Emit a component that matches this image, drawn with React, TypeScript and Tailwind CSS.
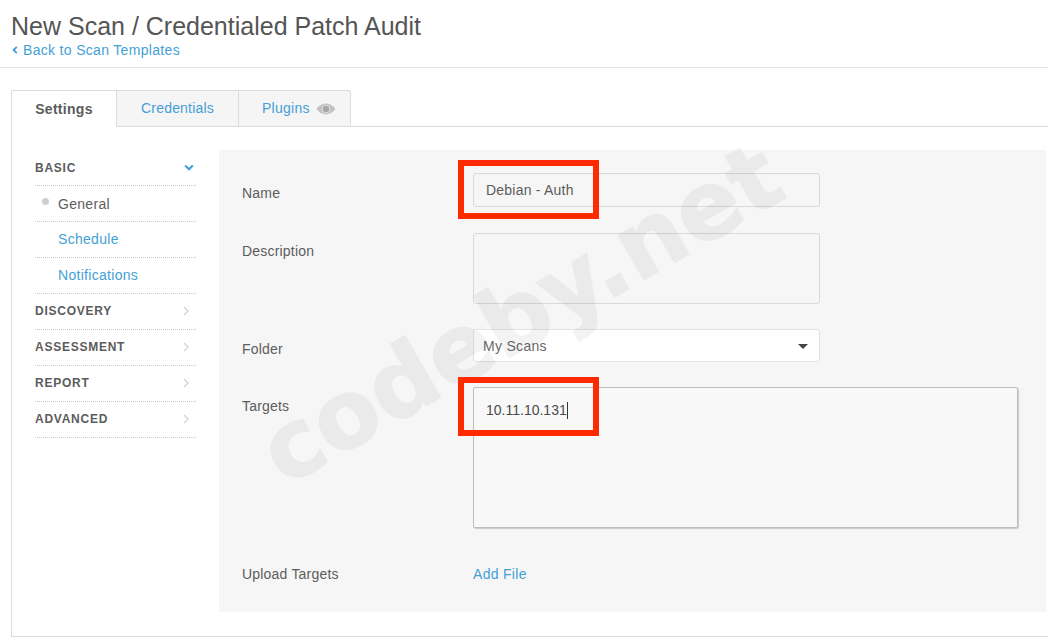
import React from 'react';

const LINK = 'text-[#459fd6]';

const SideHead = ({ label, open }: { label: string; open?: boolean }) => (
  <div className={`h-[36px] flex items-center justify-between border-b border-dotted border-[#c8c8c8] ${open ? '' : 'pb-[1px]'}`}>
    <span className="text-[12px] font-bold tracking-[0.75px] text-[#5c5c5c]">{label}</span>
    {open ? (
      <svg width="10" height="7" viewBox="0 0 10 7" className="mr-[2px]">
        <path d="M1.2 1.5 5 5.2l3.8-3.7" fill="none" stroke="#459fd6" strokeWidth="2.2" />
      </svg>
    ) : (
      <svg width="6" height="10" viewBox="0 0 6 10" className="mr-[7px]">
        <path d="M1 1l4 4-4 4" fill="none" stroke="#d2d2d2" strokeWidth="1.3" />
      </svg>
    )}
  </div>
);

const SideItem = ({ label, active }: { label: string; active?: boolean }) => (
  <div className={`relative h-[36px] flex items-center pl-[23px] border-b border-dotted border-[#c8c8c8] ${active ? 'pt-[1px]' : ''}`}>
    {active && <span className="absolute left-[7px] top-[12px] w-[7px] h-[7px] rounded-full bg-[#cfcfcf]" />}
    <span className={`text-[14px] tracking-[0.3px] ${active ? 'text-[#5c5c5c]' : LINK}`}>{label}</span>
  </div>
);

const Row = ({ label, pt, children, className }: { label: string; pt: string; children: React.ReactNode; className?: string }) => (
  <div className={`flex ${className}`}>
    <div className={`w-[231px] shrink-0 text-[14px] leading-[20px] tracking-[0.2px] text-[#5c5c5c] ${pt}`}>{label}</div>
    {children}
  </div>
);

export default function App() {
  return (
    <div className="relative w-[1048px] h-[644px] overflow-hidden bg-white font-['Liberation_Sans',Arial,sans-serif]">
      <header className="h-[68px] border-b border-[#e2e2e2] pl-[11px] pt-[11px]">
        <h1 className="text-[25px] leading-[30px] text-[#555]">New Scan / Credentialed Patch Audit</h1>
        <div className={`flex items-center text-[14px] leading-[18px] tracking-[0.32px] ${LINK}`}>
          <svg width="6" height="8" viewBox="0 0 6 8" className="ml-[1px] mr-[5px]">
            <path d="M4.8 .8 1.6 4l3.2 3.2" fill="none" stroke="#459fd6" strokeWidth="1.9" />
          </svg>
          Back to Scan Templates
        </div>
      </header>

      <main className="mt-[22px] ml-[11px] w-[1037px] h-[547px] border-l border-b border-[#dcdcdc]">
        <div className="flex h-[37px] border-b border-[#dcdcdc]">
          <div className="w-[105px] h-[37px] bg-white border-t border-r border-[#dcdcdc] flex items-center justify-center text-[14px] font-bold tracking-[0.3px] text-[#5c5c5c] rounded-tl-[2px]">
            Settings
          </div>
          <div className={`w-[122px] bg-[#f5f5f5] border-t border-r border-[#dcdcdc] flex items-center justify-center text-[14px] tracking-[0.2px] ${LINK}`}>
            Credentials
          </div>
          <div className={`w-[112px] bg-[#f5f5f5] border-t border-r border-[#dcdcdc] rounded-tr-[3px] flex items-center pl-[23px] gap-[6px] text-[14px] tracking-[0.25px] ${LINK}`}>
            Plugins
            <svg width="20" height="12" viewBox="0 0 20 12">
              <path d="M.5 6C3.500 2 7 .6 10 .6S16.500 2 19.500 6c-3 4-6.500 5.400-9.500 5.400S3.500 10 .5 6z" fill="#c2c2c2" />
              <circle cx="10" cy="6" r="4.300" fill="#dedede" />
              <circle cx="10" cy="6" r="3.200" fill="#a8a8a8" />
            </svg>
          </div>
        </div>

        <div className="flex pt-[23px]">
          <aside className="w-[161px] ml-[23px] shrink-0">
            <SideHead label="BASIC" open />
            <SideItem label="General" active />
            <SideItem label="Schedule" />
            <SideItem label="Notifications" />
            <SideHead label="DISCOVERY" />
            <SideHead label="ASSESSMENT" />
            <SideHead label="REPORT" />
            <SideHead label="ADVANCED" />
          </aside>

          <section className="ml-[23px] w-[827px] h-[462px] bg-[#f6f6f6] pl-[23px] pt-[23px]">
            <Row label="Name" pt="pt-[10px]">
              <div className="w-[347px] h-[34px] rounded-[3px] border border-[#d9d9d9] pl-[12px] pt-[1px] flex items-center text-[14px] tracking-[0.22px] text-[#5c5c5c]">
                Debian - Auth
              </div>
            </Row>
            <Row label="Description" pt="pt-[8px]" className="mt-[26px]">
              <div className="w-[347px] h-[71px] rounded-[3px] border border-[#d9d9d9]" />
            </Row>
            <Row label="Folder" pt="pt-[10px]" className="mt-[25px]">
              <div className="w-[347px] h-[33px] rounded-[3px] border border-[#e2e2e2] bg-white pl-[9px] pr-[11px] pt-[1px] flex items-center justify-between text-[14px] tracking-[0.3px] text-[#6a6a6a]">
                My Scans
                <span className="w-0 h-0 border-x-[5px] border-x-transparent border-t-[5px] border-t-[#444]" />
              </div>
            </Row>
            <Row label="Targets" pt="pt-[9px]" className="mt-[25px]">
              <div className="w-[545px] h-[141px] rounded-[2px] border border-[#bdbdbd] shadow-[1px_1px_1px_rgba(0,0,0,0.18)] bg-[#f8f8f8] pl-[12px] pt-[12px] text-[14px] leading-[20px] text-[#4a4a4a]">
                10.11.10.131<span className="inline-block w-px h-[17px] bg-[#333] align-[-4px]" />
              </div>
            </Row>
            <Row label="Upload Targets" pt="pt-0" className="mt-[36px]">
              <span className={`text-[14px] leading-[20px] tracking-[0.3px] ${LINK}`}>Add File</span>
            </Row>
          </section>
        </div>
      </main>

      {/* Watermark */}
      <div className="absolute left-[521px] top-[314px] -translate-x-1/2 -translate-y-1/2 -rotate-[30deg] whitespace-nowrap font-['DejaVu_Sans',sans-serif] font-bold text-[94px] leading-none text-black [-webkit-text-stroke:1.5px_#000] opacity-[0.045] pointer-events-none">
        codeby.net
      </div>

      {/* Annotation boxes */}
      <div className="absolute left-[458px] top-[160px] w-[141px] h-[59px] border-[6px] border-[#ff2a00]" />
      <div className="absolute left-[458px] top-[377px] w-[141px] h-[59px] border-[6px] border-[#ff2a00]" />
    </div>
  );
}
